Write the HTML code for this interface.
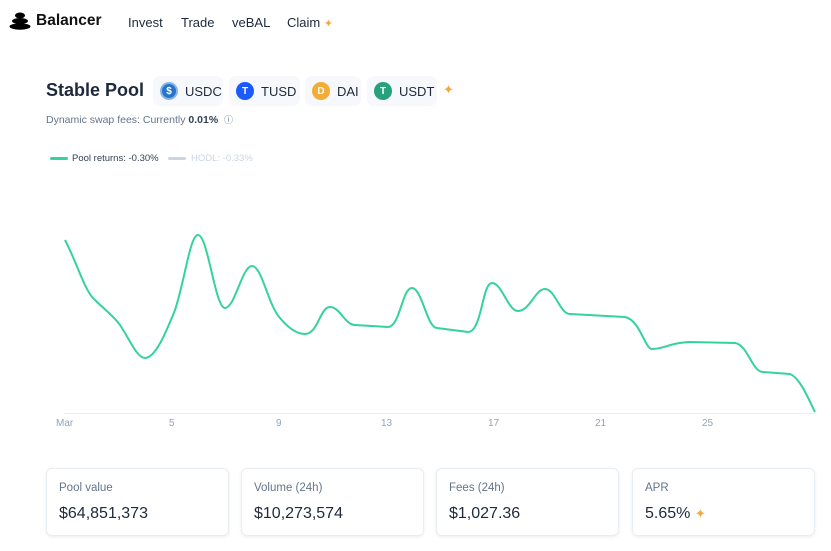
<!DOCTYPE html>
<html><head><meta charset="utf-8"><style>
*{margin:0;padding:0;box-sizing:border-box}
body{width:831px;height:551px;background:#fff;font-family:"Liberation Sans",sans-serif;color:#1e293b;position:relative;overflow:hidden}
.a{position:absolute}
.nav{font-size:13px;color:#1e293b;top:15px}
.chip{position:absolute;top:76px;height:30px;background:#f6f8fb;border-radius:7px;font-size:13px;color:#1e293b;display:flex;align-items:center;padding-left:7px}
.ic{width:18px;height:18px;border-radius:50%;margin-right:7px;display:flex;align-items:center;justify-content:center;color:#fff;font-size:10px;font-weight:bold;flex:none}
.card{position:absolute;top:468px;width:183px;height:68px;border:1px solid #e8edf4;border-radius:6px;box-shadow:0 1px 3px rgba(0,0,0,.08)}
.card .l{position:absolute;left:12px;top:13px;font-size:11.5px;color:#64748b}
.card .v{position:absolute;left:12px;top:36px;font-size:16px;color:#1e293b}
.xl{position:absolute;top:418px;font-size:10px;color:#94a3b8}
</style></head><body>
<svg class="a" style="left:9px;top:12px" width="22" height="18" viewBox="0 0 22 18"><ellipse cx="11" cy="3.5" rx="5" ry="3" fill="#000"/><ellipse cx="11" cy="9" rx="8" ry="3" fill="#000"/><ellipse cx="11" cy="14.5" rx="10.5" ry="3.2" fill="#000"/></svg>
<div class="a" style="left:36px;top:12px;font-size:15.5px;font-weight:bold;color:#111">Balancer</div>
<div class="a nav" style="left:128px">Invest</div>
<div class="a nav" style="left:181px">Trade</div>
<div class="a nav" style="left:232px">veBAL</div>
<div class="a nav" style="left:287px">Claim <span style="color:#f5a742;font-size:11px">✦</span></div>
<div class="a" style="left:46px;top:80px;font-size:18px;font-weight:bold;color:#1e293b">Stable Pool</div>
<div class="chip" style="left:153px;width:70px"><div class="ic" style="background:#2775ca;border:2px solid #8bb5e6">$</div>USDC</div>
<div class="chip" style="left:229px;width:71px"><div class="ic" style="background:#1a5aff">T</div>TUSD</div>
<div class="chip" style="left:305px;width:56px"><div class="ic" style="background:#f5ac37">D</div>DAI</div>
<div class="chip" style="left:367px;width:70px"><div class="ic" style="background:#26a17b">T</div>USDT</div>
<div class="a" style="left:443px;top:82px;color:#f5a742;font-size:13px">✦</div>
<div class="a" style="left:46px;top:113px;font-size:10.5px;color:#64748b">Dynamic swap fees: Currently <b style="color:#334155">0.01%</b> &nbsp;<span style="font-size:9px">ⓘ</span></div>
<div class="a" style="left:50px;top:157px;width:18px;height:3px;background:#34d399;border-radius:2px"></div>
<div class="a" style="left:72px;top:153px;font-size:9.5px;color:#334155">Pool returns: -0.30%</div>
<div class="a" style="left:168px;top:157px;width:18px;height:3px;background:#cbd5e1;border-radius:2px"></div>
<div class="a" style="left:191px;top:153px;font-size:9.5px;color:#cbd5e1">HODL: -0.33%</div>
<div class="a" style="left:64px;top:413px;width:752px;height:1px;background:#e8eef6"></div>
<svg class="a" style="left:0;top:0" width="831" height="450">
<path fill="none" stroke="#34d399" stroke-width="2" d="M65 240 C78 265,85 292,95 300 C105 310,113 315,120 325 C130 340,137 358,145 358 C155 358,165 335,175 310 C185 280,190 235,198 235 C208 235,215 308,225 308 C235 308,242 266,252 266 C262 266,268 305,280 318 C290 330,298 334,305 334 C318 334,320 307,330 307 C340 307,345 325,355 325 L388 327 C400 327,402 288,412 288 C422 288,427 328,437 328 L468 332 C482 332,482 283,492 283 C502 283,508 311,518 311 C530 311,535 289,545 289 C555 289,560 314,570 314 L625 317 C640 320,645 349,652 349 C665 349,668 343,690 342 L735 343 C748 345,752 372,763 372 L790 374 C800 378,808 398,815 412"/>
</svg>
<div class="xl" style="left:56px">Mar</div>
<div class="xl" style="left:169px">5</div>
<div class="xl" style="left:276px">9</div>
<div class="xl" style="left:381px">13</div>
<div class="xl" style="left:488px">17</div>
<div class="xl" style="left:595px">21</div>
<div class="xl" style="left:702px">25</div>
<div class="card" style="left:46px"><div class="l">Pool value</div><div class="v">$64,851,373</div></div>
<div class="card" style="left:241px"><div class="l">Volume (24h)</div><div class="v">$10,273,574</div></div>
<div class="card" style="left:436px"><div class="l">Fees (24h)</div><div class="v">$1,027.36</div></div>
<div class="card" style="left:632px"><div class="l">APR</div><div class="v">5.65% <span style="color:#f5a742;font-size:13px">✦</span></div></div>
</body></html>
